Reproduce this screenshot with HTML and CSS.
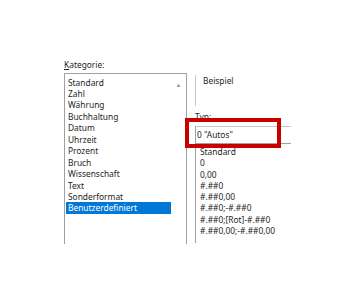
FILE: index.html
```html
<!DOCTYPE html>
<html lang="de">
  <head>
    <meta charset="UTF-8" />
    <meta name="viewport" content="width=device-width, initial-scale=1.0" />
    <title>Zellen formatieren</title>
    <link rel="stylesheet" href="styles.css">
  </head>
  <body>
    <div class="dialog">
      <div class="category">
        <div class="label"><u>K</u>ategorie:</div>
        <div class="listbox">
          <ul class="items">
            <li>Standard</li>
            <li>Zahl</li>
            <li>Währung</li>
            <li>Buchhaltung</li>
            <li>Datum</li>
            <li>Uhrzeit</li>
            <li>Prozent</li>
            <li>Bruch</li>
            <li>Wissenschaft</li>
            <li>Text</li>
            <li>Sonderformat</li>
            <li class="selected">Benutzerdefiniert</li>
          </ul>
          <div class="scrollbar"><span class="arrow">▲</span></div>
        </div>
      </div>

      <div class="side">
        <div class="sample">Beispiel</div>
        <div class="typ-label">Typ:</div>
        <div class="typ-input">0 "Autos"</div>
        <ul class="formats">
          <li>Standard</li>
          <li>0</li>
          <li>0,00</li>
          <li>#.##0</li>
          <li>#.##0,00</li>
          <li>#.##0;-#.##0</li>
          <li>#.##0;[Rot]-#.##0</li>
          <li>#.##0,00;-#.##0,00</li>
        </ul>
      </div>

      <!-- red marker drawn over the input -->
      <div class="marker"></div>
    </div>
  </body>
</html>
```

FILE: styles.css
```css
body {
  margin: 0;
  background: #fff;
  font-family: "Noto Sans", "Open Sans", sans-serif;
  font-size: 8.4px;
  color: #1e1e1e;
}

ul {
  list-style: none;
  margin: 0;
  padding: 0;
}

.dialog {
  position: relative;
  display: flex;
  align-items: flex-start;
  gap: 8px;
  padding: 59px 0 0 64px;
  height: 241px;
}

.category {
  width: 123px;
}

.label {
  line-height: 12px;
  height: 12px;
  margin-bottom: 2px;
}

.listbox {
  display: flex;
  height: 170px;
  border: 1px solid #a0a0a0;
  border-bottom: none;
}

.items {
  width: 105px;
  margin-left: 1px;
  padding-top: 2.5px;
}

.items li {
  line-height: 11.45px;
  padding-left: 2px;
  white-space: nowrap;
}

.items .selected {
  background: #0078d7;
  color: #fff;
}

.scrollbar {
  flex: 1;
  text-align: center;
  padding-top: 4px;
}

.arrow {
  font-size: 6px;
  color: #9a9a9a;
}

.side {
  width: 96px;
  padding-top: 14px;
}

.sample {
  margin-top: 2px;
  height: 31px;
  border-left: 1px solid #c8c8c8;
  padding-left: 7px;
  line-height: 11px;
  box-sizing: border-box;
}

.typ-label {
  margin-top: 5px;
  line-height: 12px;
}

.typ-input {
  margin-top: 3px;
  height: 18px;
  line-height: 16px;
  border-top: 1px solid #c8c8c8;
  border-bottom: 1px solid #a0a0a0;
  border-left: 1px solid #a0a0a0;
  padding-left: 1px;
  box-sizing: border-box;
  white-space: nowrap;
}

.formats {
  margin-top: 1px;
  height: 98px;
  border-left: 1px solid #a0a0a0;
  padding: 1px 0 0 4px;
  box-sizing: border-box;
}

.formats li {
  line-height: 11.3px;
  white-space: nowrap;
}

.marker {
  position: absolute;
  left: 185px;
  top: 118px;
  width: 96px;
  height: 30px;
  border: 4px solid #c80000;
  box-sizing: border-box;
}
```
